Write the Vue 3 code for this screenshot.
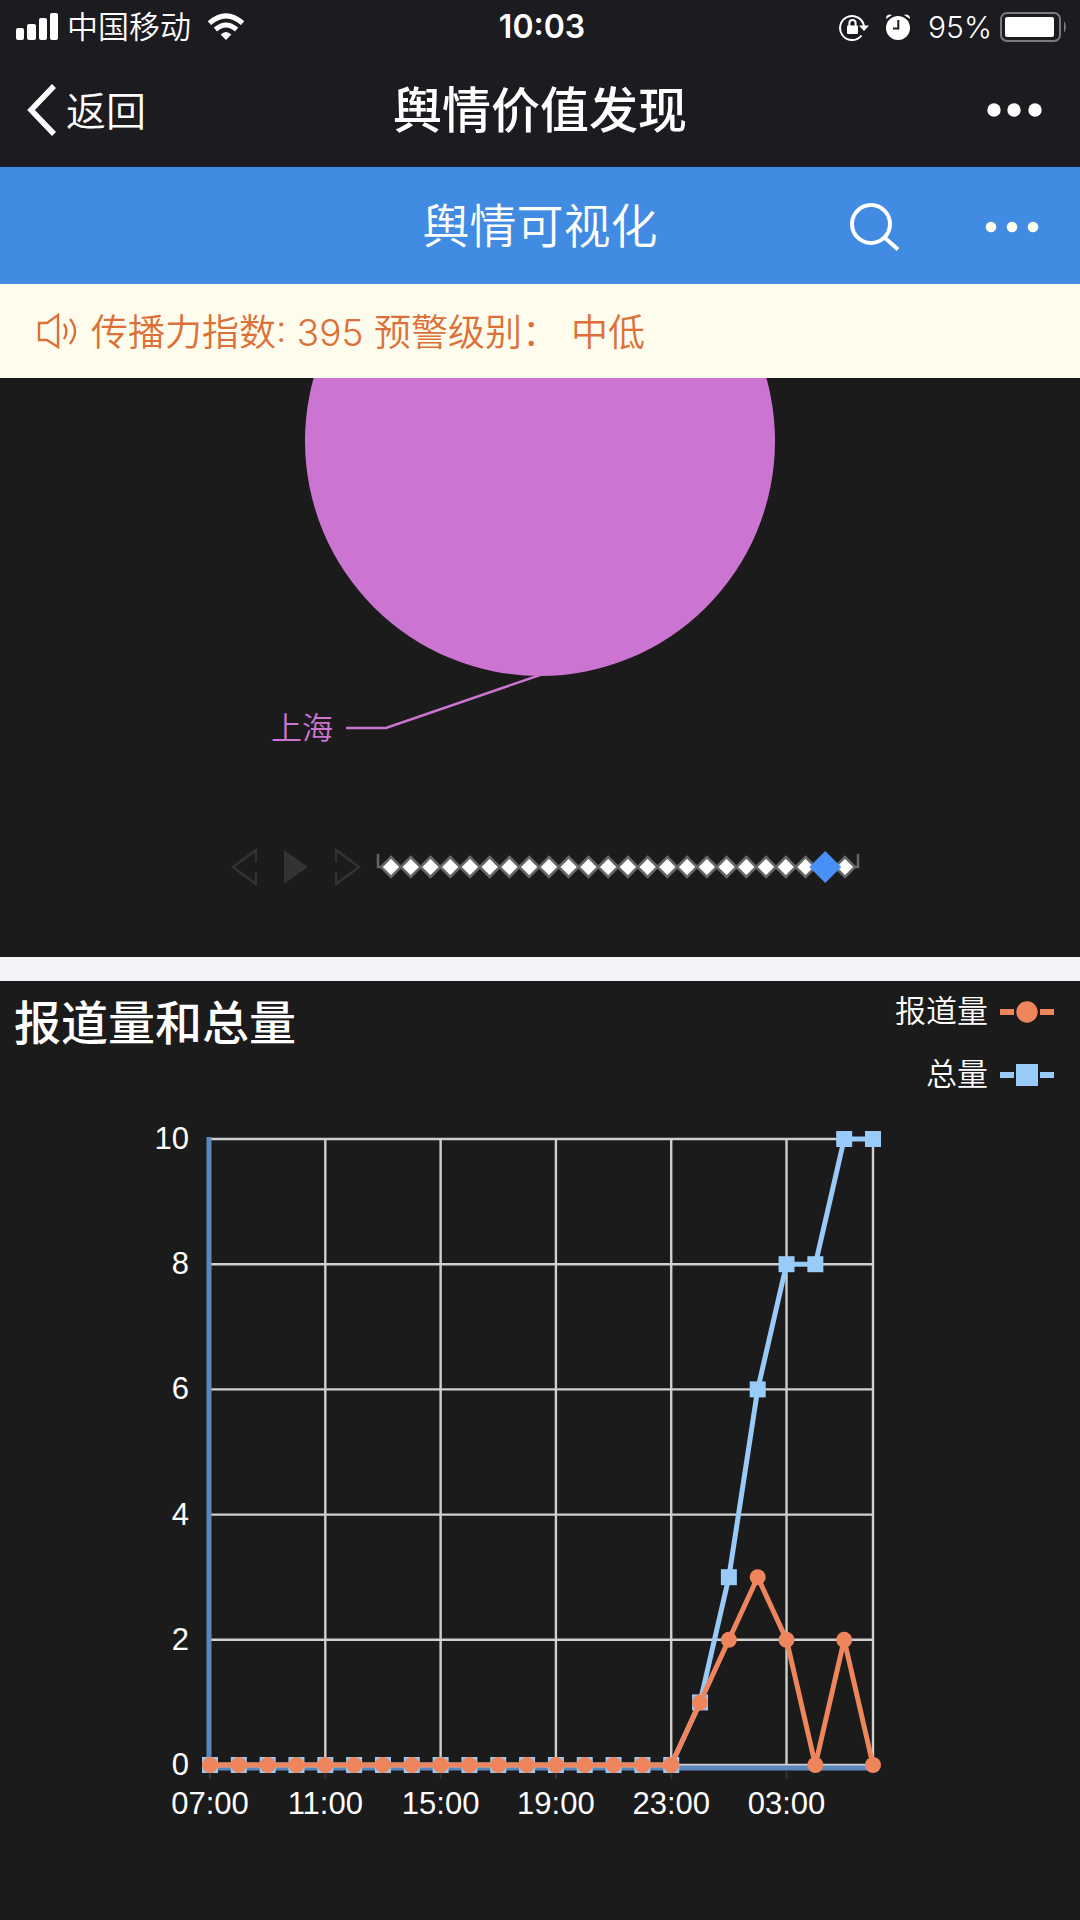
<script setup>
import { ref } from 'vue'

const hour = ref(22)
const hours = Array.from({ length: 24 }, (_, i) => i)

const reports = [0, 0, 0, 0, 0, 0, 0, 0, 0, 0, 0, 0, 0, 0, 0, 0, 0, 1, 2, 3, 2, 0, 2, 0]
const totals = [0, 0, 0, 0, 0, 0, 0, 0, 0, 0, 0, 0, 0, 0, 0, 0, 0, 1, 3, 6, 8, 8, 10, 10]
const xTicks = [
  { i: 0, label: '07:00' },
  { i: 4, label: '11:00' },
  { i: 8, label: '15:00' },
  { i: 12, label: '19:00' },
  { i: 16, label: '23:00' },
  { i: 20, label: '03:00' },
]
const yTicks = [0, 2, 4, 6, 8, 10]

const x = (i) => 210 + (i * 663) / 23
const y = (v) => 674 - v * 62.6
const line = (data) => data.map((v, i) => `${x(i)},${y(v)}`).join(' ')
const diamondX = (i) => 16 + (i * 454) / 23
</script>

<template>
  <div class="page">
    <header class="top">
      <div class="status">
        <div class="status-side">
          <svg class="signal" width="43" height="28" viewBox="0 0 43 28" fill="#fff">
            <rect x="0" y="15" width="8" height="12" rx="2" />
            <rect x="11" y="11" width="9" height="16" rx="2" />
            <rect x="23" y="5" width="8" height="22" rx="2" />
            <rect x="34" y="0" width="8" height="27" rx="2" />
          </svg>
          <span class="carrier">中国移动</span>
          <svg width="38" height="28" viewBox="0 0 38 28">
            <path d="M19 27 L13.6 21.6 Q19 16.6 24.4 21.6 Z" fill="#fff" />
            <path d="M8.4 16.5 Q19 7.5 29.6 16.5" fill="none" stroke="#fff" stroke-width="5" />
            <path d="M2.4 10.2 Q19 -4.4 35.6 10.2" fill="none" stroke="#fff" stroke-width="5" />
          </svg>
        </div>
        <time class="clock">10:03</time>
        <div class="status-side end">
          <svg width="30" height="28" viewBox="0 0 30 28">
            <path d="M22.5 22.5 A12 12 0 1 1 25 13.5" fill="none" stroke="#fff" stroke-width="2" />
            <path d="M20 12.5 H30 L25 18 Z" fill="#fff" />
            <rect x="8" y="12.5" width="11" height="8.5" rx="1" fill="#fff" />
            <path d="M10.4 13 V10 a3.1 3.1 0 0 1 6.2 0 V13" fill="none" stroke="#fff" stroke-width="2" />
          </svg>
          <svg class="alarm" width="26" height="28" viewBox="0 0 26 28">
            <circle cx="13" cy="15" r="12" fill="#fff" />
            <path d="M13.3 7 V15.5 H8" fill="none" stroke="#1c1b20" stroke-width="2" />
            <path d="M1 6 A4 4 0 0 1 7 2 Z M25 6 A4 4 0 0 0 19 2 Z" fill="#fff" />
          </svg>
          <span class="percent">95%</span>
          <svg width="68" height="30" viewBox="0 0 68 30">
            <rect x="1" y="1" width="59" height="28" rx="6" fill="none" stroke="#7b7a7e" stroke-width="2" />
            <rect x="5" y="5" width="49" height="20" rx="2" fill="#fff" />
            <path d="M64 9 Q68 15 64 21 Z" fill="#7b7a7e" />
          </svg>
        </div>
      </div>
      <nav class="nav">
        <button class="back" type="button">
          <svg width="30" height="54" viewBox="0 0 30 54">
            <path d="M27 3 L4 27 L27 51" fill="none" stroke="#fff" stroke-width="5.5" />
          </svg>
          <span>返回</span>
        </button>
        <h1 class="nav-title">舆情价值发现</h1>
        <button class="more" type="button" aria-label="更多">
          <svg width="56" height="14" viewBox="0 0 56 14" fill="#fff">
            <circle cx="8" cy="7" r="6.7" />
            <circle cx="28" cy="7" r="6.7" />
            <circle cx="49" cy="7" r="6.7" />
          </svg>
        </button>
      </nav>
    </header>

    <div class="appbar">
      <h2 class="app-title">舆情可视化</h2>
      <div class="app-actions">
        <button type="button" aria-label="搜索">
          <svg width="52" height="50" viewBox="0 0 52 50" fill="none" stroke="#fff" stroke-width="4">
            <circle cx="22" cy="22" r="19" />
            <path d="M35.5 35.5 L49 47.5" />
          </svg>
        </button>
        <button type="button" aria-label="菜单">
          <svg width="54" height="12" viewBox="0 0 54 12" fill="#fffff0">
            <circle cx="6" cy="6" r="5.3" />
            <circle cx="27" cy="6" r="5.3" />
            <circle cx="48" cy="6" r="5.3" />
          </svg>
        </button>
      </div>
    </div>

    <p class="notice">
      <svg width="42" height="38" viewBox="0 0 42 38" fill="none" stroke="#dc7038" stroke-width="2.4">
        <path d="M2 11 H10 L21 3 V35 L10 28 H2 Z" />
        <path d="M27 12 Q32 19 27 27" />
        <path d="M33 7 Q43 19 33 32" />
      </svg>
      <span>传播力指数: 395 预警级别：</span>
      <span>中低</span>
    </p>

    <section class="pie-panel">
      <svg class="pie" viewBox="0 0 1080 460">
        <circle cx="540" cy="63" r="235" fill="#cc74d2" />
        <path d="M540 297 L386 350 H346" fill="none" stroke="#cc74d2" stroke-width="2.5" />
        <text x="333" y="361" class="pie-label">上海</text>
      </svg>
      <div class="timeline">
        <div class="controls">
          <button type="button" aria-label="上一个">
            <svg width="26" height="38" viewBox="0 0 26 38" fill="none" stroke="#333" stroke-width="2.5">
              <path d="M25 14 V2 L2 19 L25 36 V24" />
            </svg>
          </button>
          <button type="button" aria-label="播放">
            <svg width="26" height="38" viewBox="0 0 26 38" fill="#333"><path d="M1 2 L25 19 L1 36 Z" /></svg>
          </button>
          <button type="button" aria-label="下一个">
            <svg width="26" height="38" viewBox="0 0 26 38" fill="none" stroke="#333" stroke-width="2.5">
              <path d="M1 14 V2 L24 19 L1 36 V24" />
            </svg>
          </button>
        </div>
        <div class="track">
          <svg viewBox="0 0 486 32">
            <path d="M3 3 V16 H483 V3" fill="none" stroke="#666" stroke-width="2.5" />
            <path
              v-for="i in hours"
              :key="i"
              :d="`M${diamondX(i)} 6 l10 10 l-10 10 l-10 -10 Z`"
              fill="#fff"
              stroke="#666"
              stroke-width="2.5"
            />
          </svg>
          <input v-model.number="hour" type="range" min="0" max="23" aria-label="时间" />
        </div>
      </div>
    </section>

    <section class="trend">
      <div class="trend-head">
        <h3 class="trend-title">报道量和总量</h3>
        <ul class="legend">
          <li>
            <span>报道量</span>
            <svg width="54" height="22" viewBox="0 0 54 22" fill="#ef855c">
              <path d="M0 8 H14 V14 H0 Z M40 8 H54 V14 H40 Z" />
              <circle cx="27" cy="11" r="10.7" />
            </svg>
          </li>
          <li>
            <span>总量</span>
            <svg width="54" height="22" viewBox="0 0 54 22" fill="#98cbf8">
              <path d="M0 8 H14 V14 H0 Z M40 8 H54 V14 H40 Z M16 0 H38 V22 H16 Z" />
            </svg>
          </li>
        </ul>
      </div>
      <svg class="chart" viewBox="0 0 1080 829">
        <g stroke="#d0d0d0" stroke-width="2.4">
          <line v-for="v in yTicks" :key="v" x1="210" :x2="x(23)" :y1="y(v)" :y2="y(v)" />
          <line v-for="t in xTicks.slice(1)" :key="t.i" :x1="x(t.i)" :x2="x(t.i)" :y1="y(10)" :y2="y(0)" />
          <line :x1="x(23)" :x2="x(23)" :y1="y(10)" :y2="y(0)" />
        </g>
        <g stroke="#333" stroke-width="2">
          <line v-for="t in xTicks" :key="t.i" :x1="x(t.i)" :x2="x(t.i)" y1="680" y2="688" />
        </g>
        <path d="M209 46 V677 H873" fill="none" stroke="#5a87bb" stroke-width="5" />
        <g class="axis y-axis">
          <text v-for="v in yTicks" :key="v" x="189" :y="y(v) + 10">{{ v }}</text>
        </g>
        <g class="axis x-axis">
          <text v-for="t in xTicks" :key="t.i" :x="x(t.i)" y="723">{{ t.label }}</text>
        </g>
        <polyline :points="line(totals)" fill="none" stroke="#98cbf8" stroke-width="5" stroke-linejoin="bevel" />
        <rect
          v-for="(v, i) in totals"
          :key="'t' + i"
          :x="x(i) - 8"
          :y="y(v) - 8"
          width="16"
          height="16"
          fill="#98cbf8"
        />
        <polyline :points="line(reports)" fill="none" stroke="#ef855c" stroke-width="5" stroke-linejoin="bevel" />
        <circle v-for="(v, i) in reports" :key="'r' + i" :cx="x(i)" :cy="y(v)" r="8" fill="#ef855c" />
      </svg>
    </section>
  </div>
</template>

<style>
body {
  margin: 0;
  background: #1b1b1b;
}
</style>

<style scoped>
.page {
  color: #fff;
  background: #1b1b1b;
  font-family: "Liberation Sans", "Noto Sans CJK SC", sans-serif;
}
h1, h2, h3, p, ul {
  margin: 0;
  padding: 0;
  font-weight: 400;
}
svg {
  display: block;
  flex: none;
}
button {
  margin: 0;
  padding: 0;
  border: 0;
  background: none;
  color: inherit;
  font: inherit;
  cursor: pointer;
}
.top {
  background: #1c1b20;
  border-bottom: 1px solid #10233c;
}
.status {
  display: grid;
  grid-template-columns: 1fr auto 1fr;
  align-items: center;
  height: 53px;
  padding: 0 12px 0 16px;
}
.status-side {
  display: flex;
  align-items: center;
}
.status-side.end {
  justify-content: flex-end;
}
.carrier {
  margin: 0 16px 0 8px;
  padding-top: 3px;
  font-size: 31px;
  line-height: 40px;
  font-weight: 350;
}
.clock {
  font: 600 32px/40px Inter, sans-serif;
}
.alarm {
  margin: 0 17px 0 16px;
}
.percent {
  margin-right: 8px;
  font: 300 30px/40px Inter, sans-serif;
}
.nav {
  display: grid;
  grid-template-columns: 1fr auto 1fr;
  align-items: center;
  height: 113px;
  padding: 0 27px;
}
.back {
  display: flex;
  align-items: center;
  justify-self: start;
  gap: 9px;
  font-size: 40px;
  line-height: 56px;
  font-weight: 350;
}
.back span {
  padding-top: 4px;
}
.nav-title {
  padding-top: 3px;
  font-size: 49px;
  line-height: 64px;
  font-weight: 500;
}
.more {
  justify-self: end;
  margin-right: 11px;
}
.appbar {
  display: grid;
  grid-template-columns: 1fr auto 1fr;
  align-items: center;
  box-sizing: border-box;
  height: 117px;
  padding: 2px 41px 0;
  background: #418be2;
}
.app-title {
  grid-column: 2;
  font-size: 47px;
  line-height: 64px;
  font-weight: 350;
}
.app-actions {
  display: flex;
  align-items: center;
  justify-content: flex-end;
  gap: 84px;
}
.notice {
  display: flex;
  align-items: center;
  height: 94px;
  padding: 0 37px;
  background: #fefded;
  color: #dc7038;
  font: 350 37px/52px Inter, "Noto Sans CJK SC", sans-serif;
}
.notice span {
  margin-left: 12px;
  padding-top: 4px;
}
.pie-panel {
  padding-bottom: 71px;
  border-bottom: 24px solid #f3f3f8;
}
.pie {
  width: 100%;
}
.pie-label {
  fill: #cc74d2;
  font-size: 31px;
  font-weight: 350;
  text-anchor: end;
}
.timeline {
  display: flex;
  align-items: center;
  justify-content: center;
  gap: 14px;
  margin-top: 10px;
  padding-left: 12px;
}
.controls {
  display: flex;
  gap: 26px;
}
.track {
  display: grid;
  width: 486px;
}
.track svg,
.track input {
  grid-area: 1 / 1;
  width: 100%;
}
.track input {
  height: 32px;
  margin: 0;
  appearance: none;
  background: none;
}
.track input::-webkit-slider-thumb {
  appearance: none;
  width: 32px;
  height: 32px;
  background: #488ff6;
  clip-path: polygon(50% 0, 100% 50%, 50% 100%, 0 50%);
}
.trend-head {
  display: flex;
  align-items: flex-start;
  justify-content: space-between;
  padding: 15px 26px 0 14px;
}
.trend-title {
  padding-top: 2px;
  font-size: 47px;
  line-height: 52px;
  font-weight: 500;
}
.legend {
  display: flex;
  flex-direction: column;
  gap: 31px;
  list-style: none;
}
.legend li {
  display: flex;
  align-items: center;
  justify-content: flex-end;
  gap: 12px;
  font-size: 31px;
  line-height: 32px;
  font-weight: 350;
}
.chart {
  width: 100%;
}
.axis {
  fill: #fff;
  font-size: 31px;
}
.y-axis {
  text-anchor: end;
}
.x-axis {
  text-anchor: middle;
}
</style>
